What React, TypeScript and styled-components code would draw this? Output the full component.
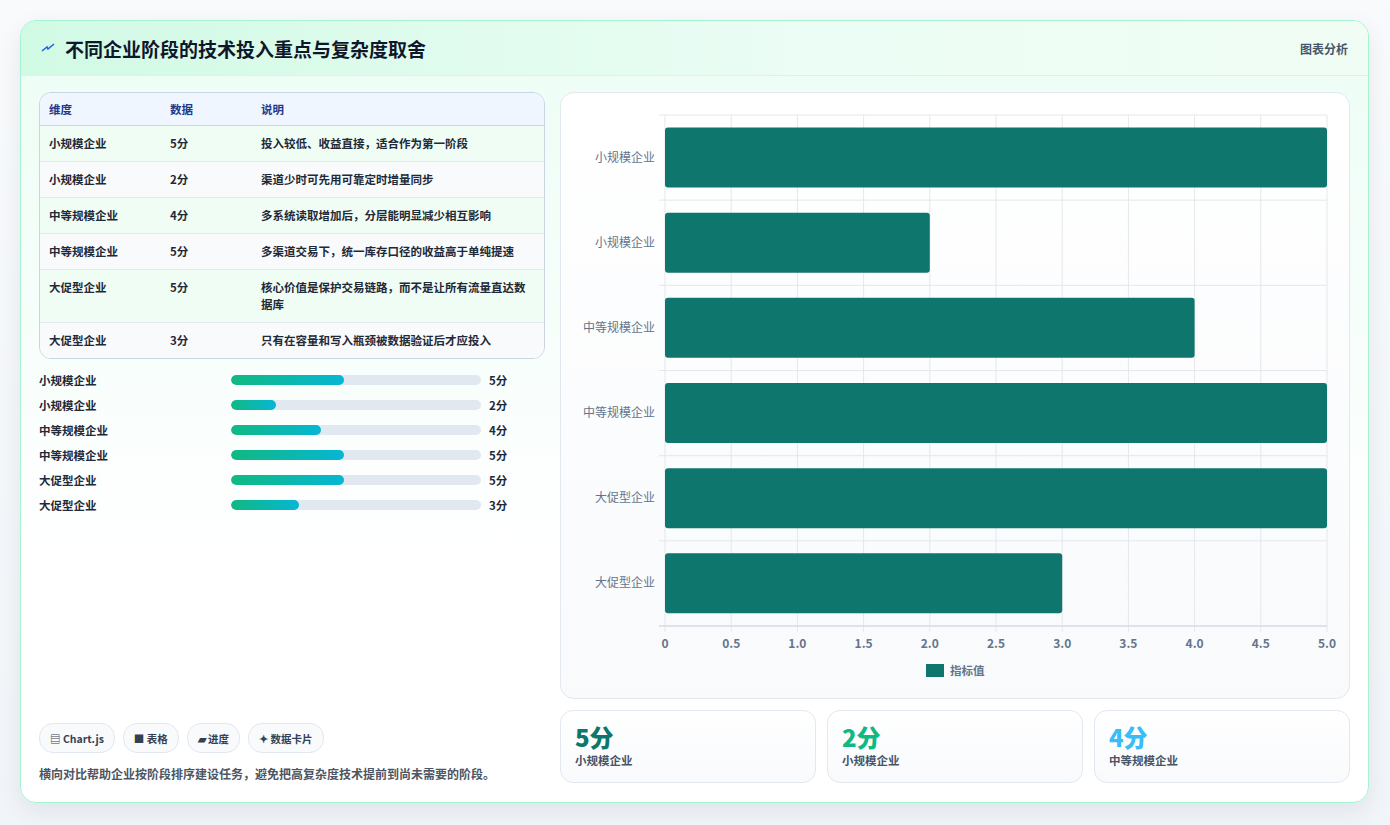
import React from 'react'
import styled, { createGlobalStyle } from 'styled-components'

const GlobalStyle = createGlobalStyle`
  html, body { margin: 0; padding: 0; background: #f3f4f6; }
  body { font-family: "Noto Sans CJK SC", "Noto Sans", sans-serif; }
`

const rows = [
  { name: '小规模企业', value: 5, note: '投入较低、收益直接，适合作为第一阶段' },
  { name: '小规模企业', value: 2, note: '渠道少时可先用可靠定时增量同步' },
  { name: '中等规模企业', value: 4, note: '多系统读取增加后，分层能明显减少相互影响' },
  { name: '中等规模企业', value: 5, note: '多渠道交易下，统一库存口径的收益高于单纯提速' },
  { name: '大促型企业', value: 5, note: '核心价值是保护交易链路，而不是让所有流量直达数据库' },
  { name: '大促型企业', value: 3, note: '只有在容量和写入瓶颈被数据验证后才应投入' },
]

const Page = styled.div`
  width: 1390px;
  height: 825px;
  padding: 20px 20px 0 20px;
  box-sizing: border-box;
  background: linear-gradient(180deg, #f8fafc 0%, #f1f5f9 100%);
`

const Card = styled.div`
  width: 1349px;
  height: 783px;
  box-sizing: border-box;
  border: 1px solid #a7f3d0;
  border-radius: 16px;
  background: linear-gradient(180deg, #ecfdf5 0%, #ffffff 70%);
  box-shadow: 0 8px 24px rgba(15, 23, 42, 0.08);
  overflow: hidden;
  display: flex;
  flex-direction: column;
`

const Header = styled.div`
  height: 55px;
  flex-shrink: 0;
  box-sizing: border-box;
  padding: 0 20px;
  display: flex;
  align-items: center;
  justify-content: space-between;
  background: linear-gradient(90deg, #d1fae5 0%, #ecfdf5 60%, #f0fdf4 100%);
  border-bottom: 1px solid #d1fae5;
`

const Title = styled.h1`
  margin: 0;
  display: flex;
  align-items: center;
  gap: 10px;
  font-size: 19px;
  font-weight: 700;
  color: #0f172a;
`

const HeaderTag = styled.span`
  font-size: 12px;
  font-weight: 600;
  color: #475569;
`

const Body = styled.div`
  flex: 1;
  display: grid;
  grid-template-columns: 506px 790px;
  gap: 15px;
  padding: 16px 18px 18px 18px;
  min-height: 0;
`

const LeftCol = styled.div`
  display: flex;
  flex-direction: column;
`

const Table = styled.table`
  width: 100%;
  border-collapse: separate;
  border-spacing: 0;
  border: 1px solid #cbd5e1;
  border-radius: 12px;
  overflow: hidden;
  font-size: 11.5px;
  font-weight: 600;
  color: #1f2937;

  th {
    text-align: left;
    background: #eff6ff;
    color: #1e3a8a;
    height: 32px;
    padding: 0 9px;
    border-bottom: 1px solid #cbd5e1;
    font-weight: 600;
  }

  td {
    padding: 9px 9px;
    line-height: 17px;
    vertical-align: top;
    border-bottom: 1px solid #e2e8f0;
  }

  tr:last-child td { border-bottom: none; }
  tbody tr:nth-child(odd) { background: #f0fdf4; }
  tbody tr:nth-child(even) { background: #f8fafc; }
`

const Bars = styled.div`
  margin-top: 12px;
  display: flex;
  flex-direction: column;
  gap: 7px;
`

const BarRow = styled.div`
  display: grid;
  grid-template-columns: 184px 250px 40px;
  gap: 8px;
  align-items: center;
  font-size: 11.5px;
  font-weight: 700;
  color: #1f2937;
  height: 18px;
`

const Track = styled.div`
  height: 10px;
  border-radius: 5px;
  background: #e2e8f0;
  overflow: hidden;
`

const Fill = styled.div`
  height: 100%;
  border-radius: 5px;
  background: linear-gradient(90deg, #10b981, #06b6d4);
`

const Spacer = styled.div` flex: 1; `

const Chips = styled.div`
  display: flex;
  gap: 8px;
  margin-bottom: 12px;
`

const Chip = styled.span`
  display: inline-flex;
  align-items: center;
  gap: 3px;
  height: 28px;
  padding: 0 10px;
  border: 1px solid #e2e8f0;
  border-radius: 14px;
  background: #f8fafc;
  font-size: 10.5px;
  font-weight: 700;
  color: #334155;
`

const Footnote = styled.p`
  margin: 0 0 2px 0;
  font-size: 12px;
  font-weight: 600;
  color: #4b5563;
`

const RightCol = styled.div`
  display: flex;
  flex-direction: column;
  gap: 11px;
`

const ChartPanel = styled.div`
  height: 607px;
  box-sizing: border-box;
  border: 1px solid #e2e8f0;
  border-radius: 14px;
  background: linear-gradient(180deg, #ffffff 0%, #f8fafc 100%);
`

const Stats = styled.div`
  display: grid;
  grid-template-columns: repeat(3, 1fr);
  gap: 11px;
`

const Stat = styled.div`
  height: 73px;
  box-sizing: border-box;
  border: 1px solid #e2e8f0;
  border-radius: 13px;
  background: linear-gradient(180deg, #ffffff, #f8fafc);
  padding: 11px 14px;
`

const StatValue = styled.div<{ $color: string }>`
  font-size: 24px;
  font-weight: 800;
  line-height: 30px;
  color: ${p => p.$color};
`

const StatLabel = styled.div`
  font-size: 11.5px;
  font-weight: 600;
  color: #475569;
`

const Chart: React.FC = () => {
  const x0 = 104, x1 = 766, y0 = 22, y1 = 533
  const band = (y1 - y0) / 6
  const sx = (v: number) => x0 + (v / 5) * (x1 - x0)
  const ticks = [0, 0.5, 1, 1.5, 2, 2.5, 3, 3.5, 4, 4.5, 5]
  return (
    <svg width="788" height="605" viewBox="0 0 788 605">
      {ticks.map(t => (
        <line key={t} x1={sx(t)} x2={sx(t)} y1={y0} y2={y1 + 6} stroke="#e5e7eb" />
      ))}
      {Array.from({ length: 7 }).map((_, i) => (
        <line key={i} x1={x0 - 6} x2={x1} y1={y0 + i * band} y2={y0 + i * band} stroke="#e5e7eb" />
      ))}
      <line x1={x0 - 6} x2={x1} y1={y1} y2={y1} stroke="#cbd5e1" />
      {rows.map((r, i) => (
        <g key={i}>
          <rect x={x0} y={y0 + i * band + 12.5} width={sx(r.value) - x0} height={60} rx={3} fill="#0f766e" />
          <text x={x0 - 10} y={y0 + i * band + band / 2 + 4} textAnchor="end" fontSize="12" fill="#64748b">{r.name}</text>
        </g>
      ))}
      {ticks.map(t => (
        <text key={t} x={sx(t)} y={y1 + 22} textAnchor="middle" fontSize="12" fontWeight="600" fill="#64748b">
          {t === 0 || t === 5 ? t.toFixed(t === 0 ? 0 : 1) : t.toFixed(1)}
        </text>
      ))}
      <rect x={365} y={571} width={18} height={13} fill="#0f766e" />
      <text x={389} y={582} fontSize="11.5" fontWeight="600" fill="#64748b">指标值</text>
    </svg>
  )
}

export default function App() {
  return (
    <Page>
      <GlobalStyle />
      <Card>
        <Header>
          <Title>
            <svg width="14" height="10" viewBox="0 0 14 10">
              <path d="M1 8 L6 4 L7 6 L13 1" stroke="#2563eb" strokeWidth="1.6" fill="none" />
            </svg>
            不同企业阶段的技术投入重点与复杂度取舍
          </Title>
          <HeaderTag>图表分析</HeaderTag>
        </Header>
        <Body>
          <LeftCol>
            <Table>
              <colgroup>
                <col style={{ width: 121 }} />
                <col style={{ width: 91 }} />
                <col />
              </colgroup>
              <thead>
                <tr><th>维度</th><th>数据</th><th>说明</th></tr>
              </thead>
              <tbody>
                {rows.map((r, i) => (
                  <tr key={i}><td>{r.name}</td><td>{r.value}分</td><td>{r.note}</td></tr>
                ))}
              </tbody>
            </Table>
            <Bars>
              {rows.map((r, i) => (
                <BarRow key={i}>
                  <span>{r.name}</span>
                  <Track><Fill style={{ width: `${r.value * 9}%` }} /></Track>
                  <span>{r.value}分</span>
                </BarRow>
              ))}
            </Bars>
            <Spacer />
            <Chips>
              <Chip>▤ Chart.js</Chip>
              <Chip>■ 表格</Chip>
              <Chip>▰ 进度</Chip>
              <Chip>✦ 数据卡片</Chip>
            </Chips>
            <Footnote>横向对比帮助企业按阶段排序建设任务，避免把高复杂度技术提前到尚未需要的阶段。</Footnote>
          </LeftCol>
          <RightCol>
            <ChartPanel><Chart /></ChartPanel>
            <Stats>
              <Stat><StatValue $color="#0f766e">5分</StatValue><StatLabel>小规模企业</StatLabel></Stat>
              <Stat><StatValue $color="#10b981">2分</StatValue><StatLabel>小规模企业</StatLabel></Stat>
              <Stat><StatValue $color="#38bdf8">4分</StatValue><StatLabel>中等规模企业</StatLabel></Stat>
            </Stats>
          </RightCol>
        </Body>
      </Card>
    </Page>
  )
}
